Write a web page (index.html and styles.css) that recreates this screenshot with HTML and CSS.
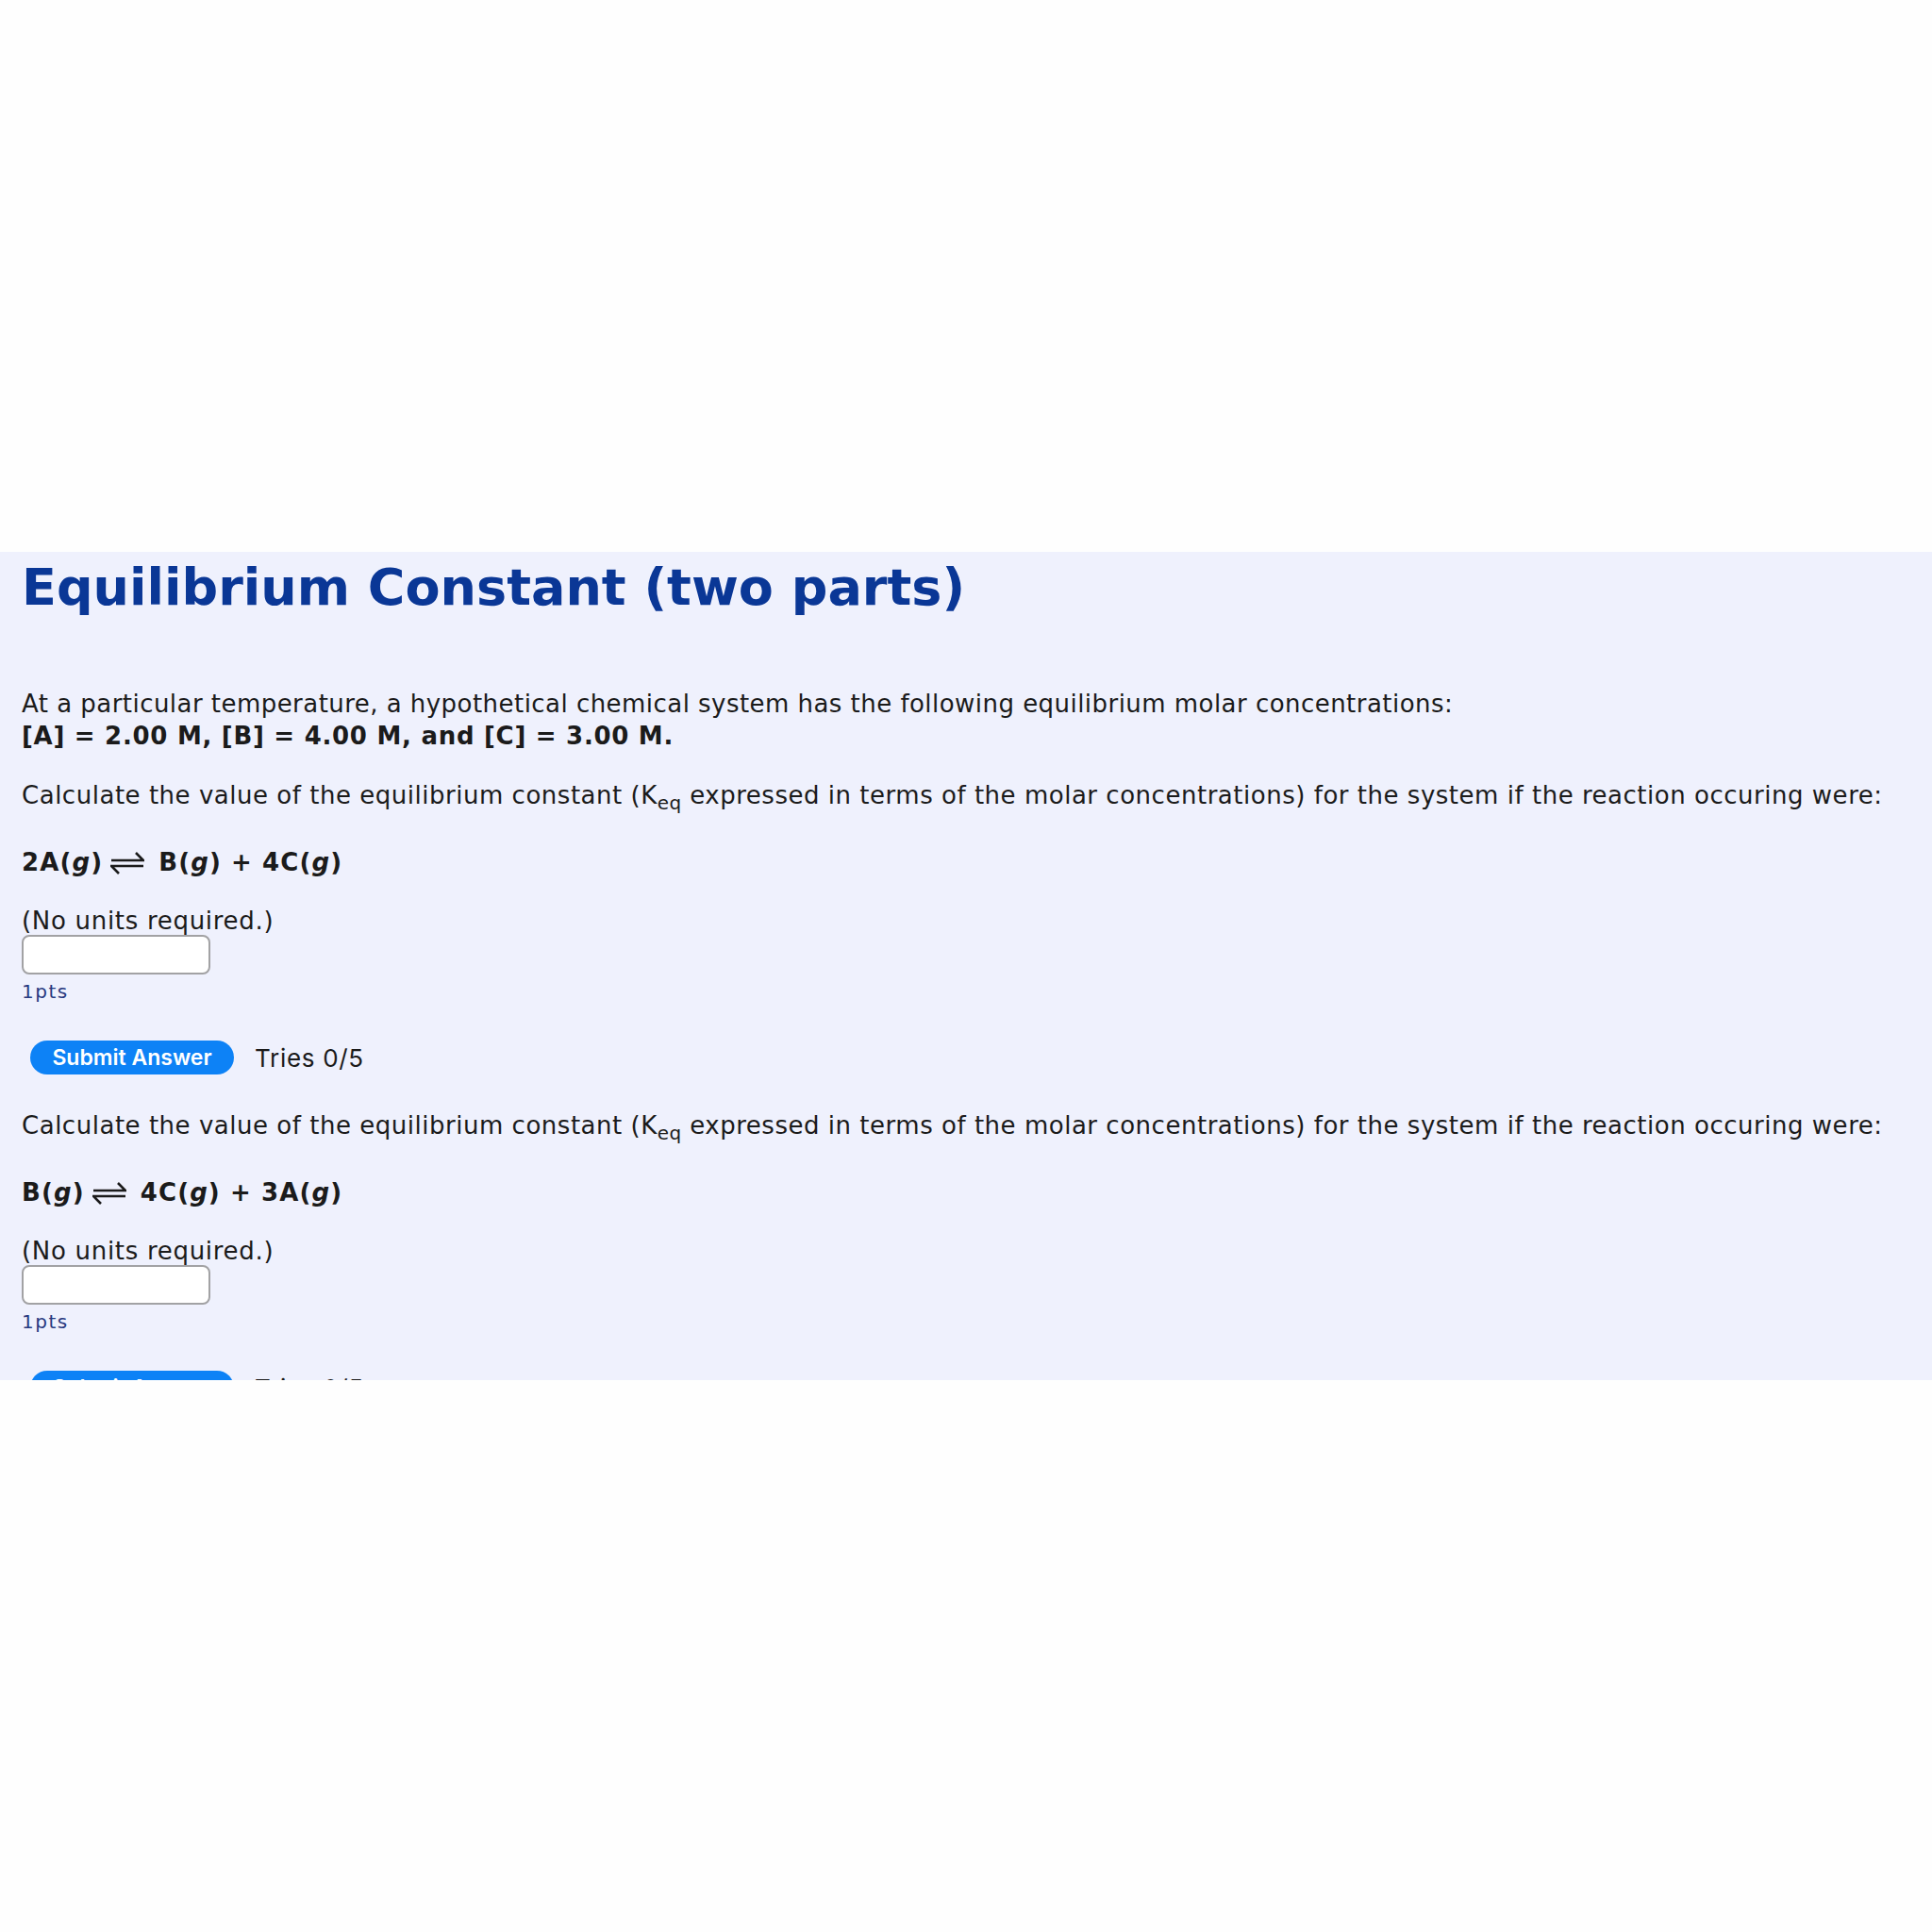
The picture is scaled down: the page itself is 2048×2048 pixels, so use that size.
FILE: index.html
```html
<!DOCTYPE html>
<html>
<head>
<meta charset="utf-8">
<link rel="stylesheet" href="styles.css">
</head>
<body>
<div class="top-space"></div>
<div class="panel">
  <h1 class="title">Equilibrium Constant (two parts)</h1>
  <p class="intro">At a particular temperature, a hypothetical chemical system has the following equilibrium molar concentrations:<br><b>[A] = 2.00 M, [B] = 4.00 M, and [C] = 3.00 M.</b></p>

  <div class="part">
    <p class="prompt">Calculate the value of the equilibrium constant (K<sub>eq</sub> expressed in terms of the molar concentrations) for the system if the reaction occuring were:</p>
    <p class="eq">2A(<i>g</i>)<svg class="arrow" viewBox="0 0 36 30" width="36" height="30"><path d="M1 12 H35 L27 4" fill="none" stroke="#1b1b1b" stroke-width="2.6" stroke-linejoin="miter"/><path d="M35 18 H1 L9 26" fill="none" stroke="#1b1b1b" stroke-width="2.6" stroke-linejoin="miter"/></svg> B(<i>g</i>) + 4C(<i>g</i>)</p>
    <p class="note">(No units required.)</p>
    <input class="answer" type="text">
    <div class="pts">1pts</div>
    <div class="actions"><button class="submit">Submit Answer</button><span class="tries">Tries 0/5</span></div>
  </div>

  <div class="part">
    <p class="prompt">Calculate the value of the equilibrium constant (K<sub>eq</sub> expressed in terms of the molar concentrations) for the system if the reaction occuring were:</p>
    <p class="eq">B(<i>g</i>)<svg class="arrow" viewBox="0 0 36 30" width="36" height="30"><path d="M1 12 H35 L27 4" fill="none" stroke="#1b1b1b" stroke-width="2.6" stroke-linejoin="miter"/><path d="M35 18 H1 L9 26" fill="none" stroke="#1b1b1b" stroke-width="2.6" stroke-linejoin="miter"/></svg> 4C(<i>g</i>) + 3A(<i>g</i>)</p>
    <p class="note">(No units required.)</p>
    <input class="answer" type="text">
    <div class="pts">1pts</div>
    <div class="actions"><button class="submit">Submit Answer</button><span class="tries">Tries 0/5</span></div>
  </div>
</div>
</body>
</html>
```

FILE: styles.css
```css
html, body {
  margin: 0;
  padding: 0;
  background: #fefefe;
}

.top-space {
  height: 585px;
}

.panel {
  height: 878px;
  overflow: hidden;
  background: #eff1fd;
  padding: 6px 0 0 23px;
  box-sizing: border-box;
  font-family: "DejaVu Sans", Verdana, sans-serif;
  color: #1b1b1b;
}

.title {
  margin: 0;
  font-size: 54px;
  line-height: 64px;
  font-weight: bold;
  color: #0a3796;
}

.intro {
  margin: 74px 0 0 0;
  font-size: 26px;
  line-height: 34px;
  letter-spacing: 0.46px;
}

.intro b {
  letter-spacing: 0.72px;
}

.prompt {
  margin: 29px 0 0 0;
  font-size: 26px;
  line-height: 34px;
  letter-spacing: 0.52px;
}

.part + .part .prompt {
  margin-top: 37px;
}

sub {
  font-size: 20px;
  line-height: 0;
  vertical-align: -6px;
  letter-spacing: 0.3px;
}

.eq {
  margin: 37px 0 0 0;
  font-size: 26px;
  line-height: 34px;
  font-weight: bold;
  letter-spacing: 1.1px;
  display: flex;
  align-items: baseline;
  white-space: pre;
}

.arrow {
  align-self: center;
  margin: 0 5px 0 8px;
  position: relative;
  top: 1px;
}

.note {
  margin: 30px 0 0 0;
  font-size: 26px;
  line-height: 30px;
  letter-spacing: 0.7px;
}

.answer {
  display: block;
  margin: 0;
  width: 200px;
  height: 42px;
  box-sizing: border-box;
  background: #ffffff;
  border: 2px solid #a2a2a4;
  border-radius: 8px;
  padding: 0;
}

.pts {
  margin-top: 6px;
  font-family: "DejaVu Sans", Verdana, sans-serif;
  font-size: 20px;
  line-height: 24px;
  letter-spacing: 1.5px;
  color: #283a80;
}

.actions {
  margin-top: 40px;
  display: flex;
  align-items: center;
  gap: 22px;
}

.submit {
  margin-left: 9px;
  width: 216px;
  height: 36px;
  border: none;
  border-radius: 18px;
  background: #0d82f6;
  color: #ffffff;
  font-family: Inter, "DejaVu Sans", sans-serif;
  font-size: 23px;
  font-weight: 600;
  padding: 0;
}

.tries {
  font-family: Inter, "DejaVu Sans", sans-serif;
  font-size: 26px;
  letter-spacing: 0.7px;
  color: #1b1b1b;
}
```
